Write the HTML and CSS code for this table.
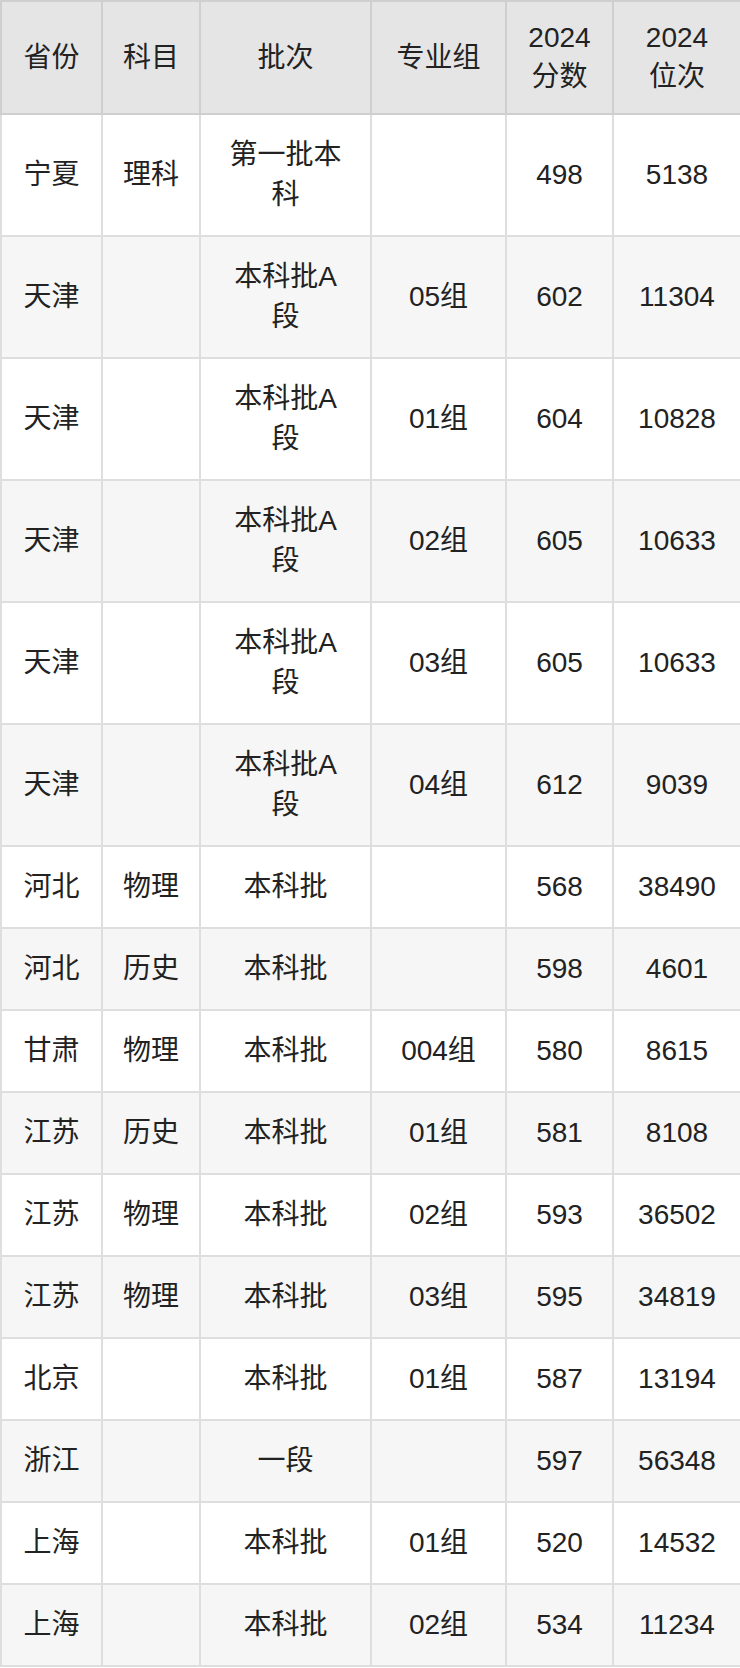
FILE: index.html
```html
<!DOCTYPE html>
<html lang="zh-CN">
<head>
<meta charset="utf-8">
<title>2024 分数位次</title>
<link rel="stylesheet" href="styles.css">
</head>
<body>
<table class="scores">
  <colgroup>
    <col class="c-prov">
    <col class="c-subj">
    <col class="c-batch">
    <col class="c-group">
    <col class="c-score">
    <col class="c-rank">
  </colgroup>
  <thead>
    <tr>
      <th>省份</th>
      <th>科目</th>
      <th class="batch">批次</th>
      <th>专业组</th>
      <th>2024<br>分数</th>
      <th>2024<br>位次</th>
    </tr>
  </thead>
  <tbody>
    <tr><td>宁夏</td><td>理科</td><td class="batch">第一批本科</td><td></td><td>498</td><td>5138</td></tr>
    <tr><td>天津</td><td></td><td class="batch">本科批A段</td><td>05组</td><td>602</td><td>11304</td></tr>
    <tr><td>天津</td><td></td><td class="batch">本科批A段</td><td>01组</td><td>604</td><td>10828</td></tr>
    <tr><td>天津</td><td></td><td class="batch">本科批A段</td><td>02组</td><td>605</td><td>10633</td></tr>
    <tr><td>天津</td><td></td><td class="batch">本科批A段</td><td>03组</td><td>605</td><td>10633</td></tr>
    <tr><td>天津</td><td></td><td class="batch">本科批A段</td><td>04组</td><td>612</td><td>9039</td></tr>
    <tr><td>河北</td><td>物理</td><td class="batch">本科批</td><td></td><td>568</td><td>38490</td></tr>
    <tr><td>河北</td><td>历史</td><td class="batch">本科批</td><td></td><td>598</td><td>4601</td></tr>
    <tr><td>甘肃</td><td>物理</td><td class="batch">本科批</td><td>004组</td><td>580</td><td>8615</td></tr>
    <tr><td>江苏</td><td>历史</td><td class="batch">本科批</td><td>01组</td><td>581</td><td>8108</td></tr>
    <tr><td>江苏</td><td>物理</td><td class="batch">本科批</td><td>02组</td><td>593</td><td>36502</td></tr>
    <tr><td>江苏</td><td>物理</td><td class="batch">本科批</td><td>03组</td><td>595</td><td>34819</td></tr>
    <tr><td>北京</td><td></td><td class="batch">本科批</td><td>01组</td><td>587</td><td>13194</td></tr>
    <tr><td>浙江</td><td></td><td class="batch">一段</td><td></td><td>597</td><td>56348</td></tr>
    <tr><td>上海</td><td></td><td class="batch">本科批</td><td>01组</td><td>520</td><td>14532</td></tr>
    <tr><td>上海</td><td></td><td class="batch">本科批</td><td>02组</td><td>534</td><td>11234</td></tr>
  </tbody>
</table>
</body>
</html>
```
FILE: styles.css
```css
html, body {
  margin: 0;
  padding: 0;
  background: #ffffff;
}

.scores {
  width: 740px;
  border-collapse: collapse;
  table-layout: fixed;
  font-family: "Liberation Sans", "Noto Sans CJK SC", sans-serif;
  font-size: 28px;
  line-height: 40px;
  color: #222222;
}

.c-prov { width: 101px; }
.c-subj { width: 98px; }
.c-batch { width: 171px; }
.c-group { width: 135px; }
.c-score { width: 107px; }
.c-rank { width: 128px; }

.scores th,
.scores td {
  border: 2px solid #dedede;
  padding: 20px 6px;
  text-align: center;
  vertical-align: middle;
  font-weight: normal;
}

.scores th {
  background: #e5e5e5;
  border-color: #cfcfcf;
  padding-top: 16px;
  padding-bottom: 17px;
  line-height: 39px;
}

.scores .batch {
  padding-left: 24px;
  padding-right: 24px;
}

.scores tbody tr:nth-child(even) td {
  background: #f6f6f6;
}
```
